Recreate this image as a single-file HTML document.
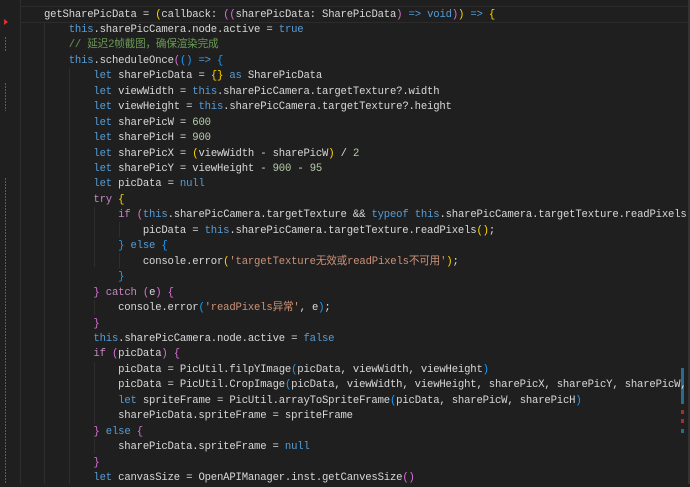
<!DOCTYPE html>
<html><head><meta charset="utf-8"><style>
body{margin:0;width:690px;height:484px;background:#1f1f1f;overflow:hidden;position:relative;font-family:"Liberation Mono","Noto Sans CJK SC",monospace;}
pre{position:absolute;left:44px;top:7.5px;margin:0;font-family:inherit;font-size:10.6px;letter-spacing:-0.18px;line-height:15.45px;color:#d8d8d8;white-space:pre;}
.k{color:#569cd6}.c{color:#c586c0}.f{color:#d8d8d8}.n{color:#b5cea8}.s{color:#ce9178}.g{color:#6a9955}
.y{color:#ffd700}.p{color:#da70d6}.b{color:#179fff}
.gl{position:absolute;top:0;width:1px;background:#2e2e2e;}
.m{position:absolute;left:5px;width:1px;background:repeating-linear-gradient(#2a6a90 0 2px,#1f1f1f 2px 3px);}
</style></head><body>
<div class="gl" style="left:20px;height:484px"></div>
<div class="gl" style="left:44px;top:22px;height:462px"></div>
<div class="gl" style="left:69px;top:68px;height:416px"></div>
<div class="gl" style="left:94px;top:207px;height:60px"></div>
<div class="gl" style="left:119px;top:222px;height:15px"></div>
<div class="gl" style="left:119px;top:253px;height:15px"></div>
<div class="gl" style="left:94px;top:300px;height:15px"></div>
<div class="gl" style="left:94px;top:362px;height:62px"></div>
<div class="gl" style="left:94px;top:439px;height:15px"></div>
<div style="position:absolute;left:20px;top:6px;width:670px;height:15px;border-top:1px solid #2c2c2c;border-bottom:1px solid #2c2c2c"></div>
<div style="position:absolute;left:4px;top:19px;width:0;height:0;border-top:3px solid transparent;border-bottom:3px solid transparent;border-left:4px solid #e03030"></div>
<div class="m" style="top:37px;height:14px"></div>
<div class="m" style="top:83px;height:28px"></div>
<div class="m" style="top:178px;height:306px"></div>
<div style="position:absolute;left:688px;top:0;width:2px;height:484px;background:#333"></div>
<div style="position:absolute;left:681px;top:368px;width:3px;height:36px;background:#2a6a90"></div>
<div style="position:absolute;left:681px;top:410px;width:3px;height:4px;background:#a03030"></div>
<div style="position:absolute;left:681px;top:419px;width:3px;height:4px;background:#a03030"></div>
<div style="position:absolute;left:681px;top:429px;width:3px;height:4px;background:#2a6a90"></div>
<pre><span class="f">getSharePicData</span> = <span class="y">(</span>callback: <span class="p">((</span>sharePicData: SharePicData<span class="p">)</span> <span class="k">=&gt;</span> <span class="k">void</span><span class="p">)</span><span class="y">)</span> <span class="k">=&gt;</span> <span class="y">{</span>
    <span class="k">this</span>.sharePicCamera.node.active = <span class="k">true</span>
    <span class="g">// 延迟2帧截图，确保渲染完成</span>
    <span class="k">this</span>.<span class="f">scheduleOnce</span><span class="p">(</span><span class="b">()</span> <span class="k">=&gt;</span> <span class="b">{</span>
        <span class="k">let</span> sharePicData = <span class="y">{}</span> <span class="k">as</span> SharePicData
        <span class="k">let</span> viewWidth = <span class="k">this</span>.sharePicCamera.targetTexture?.width
        <span class="k">let</span> viewHeight = <span class="k">this</span>.sharePicCamera.targetTexture?.height
        <span class="k">let</span> sharePicW = <span class="n">600</span>
        <span class="k">let</span> sharePicH = <span class="n">900</span>
        <span class="k">let</span> sharePicX = <span class="y">(</span>viewWidth - sharePicW<span class="y">)</span> / <span class="n">2</span>
        <span class="k">let</span> sharePicY = viewHeight - <span class="n">900</span> - <span class="n">95</span>
        <span class="k">let</span> picData = <span class="k">null</span>
        <span class="c">try</span> <span class="y">{</span>
            <span class="c">if</span> <span class="p">(</span><span class="k">this</span>.sharePicCamera.targetTexture &amp;&amp; <span class="k">typeof</span> <span class="k">this</span>.sharePicCamera.targetTexture.readPixels
                picData = <span class="k">this</span>.sharePicCamera.targetTexture.<span class="f">readPixels</span><span class="y">()</span>;
            <span class="b">}</span> <span class="k">else</span> <span class="b">{</span>
                console.<span class="f">error</span><span class="y">(</span><span class="s">'targetTexture无效或readPixels不可用'</span><span class="y">)</span>;
            <span class="b">}</span>
        <span class="p">}</span> <span class="c">catch</span> <span class="p">(</span>e<span class="p">)</span> <span class="p">{</span>
            console.<span class="f">error</span><span class="b">(</span><span class="s">'readPixels异常'</span>, e<span class="b">)</span>;
        <span class="p">}</span>
        <span class="k">this</span>.sharePicCamera.node.active = <span class="k">false</span>
        <span class="c">if</span> <span class="p">(</span>picData<span class="p">)</span> <span class="p">{</span>
            picData = PicUtil.<span class="f">filpYImage</span><span class="b">(</span>picData, viewWidth, viewHeight<span class="b">)</span>
            picData = PicUtil.<span class="f">CropImage</span><span class="b">(</span>picData, viewWidth, viewHeight, sharePicX, sharePicY, sharePicW,
            <span class="k">let</span> spriteFrame = PicUtil.<span class="f">arrayToSpriteFrame</span><span class="b">(</span>picData, sharePicW, sharePicH<span class="b">)</span>
            sharePicData.spriteFrame = spriteFrame
        <span class="p">}</span> <span class="k">else</span> <span class="p">{</span>
            sharePicData.spriteFrame = <span class="k">null</span>
        <span class="p">}</span>
        <span class="k">let</span> canvasSize = OpenAPIManager.inst.<span class="f">getCanvesSize</span><span class="p">()</span>
</pre>
</body></html>
